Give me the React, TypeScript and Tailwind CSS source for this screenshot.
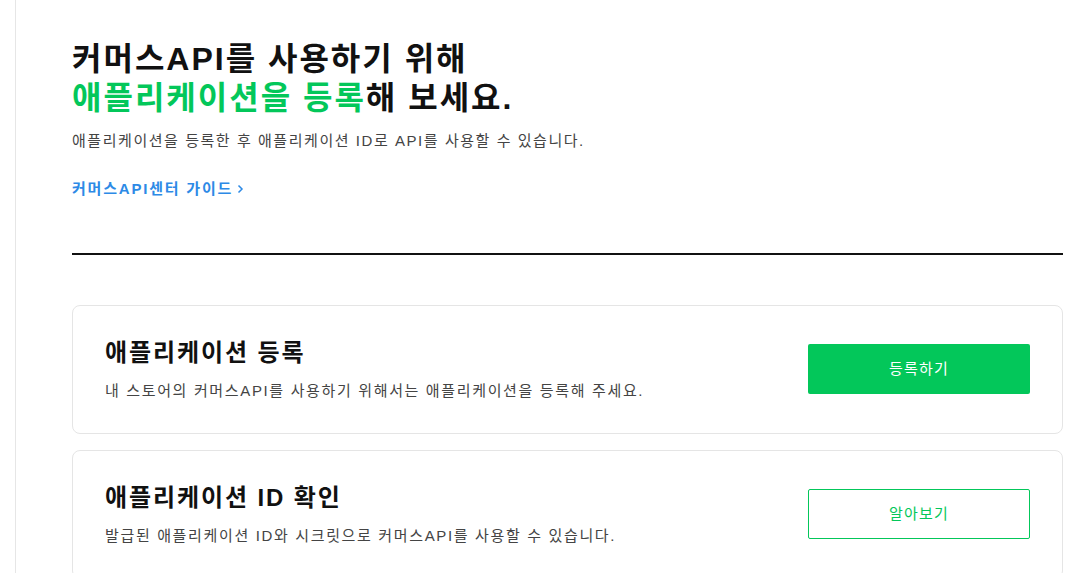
import React from "react";

const font = { fontFamily: '"Liberation Sans", "Noto Sans CJK KR", sans-serif' };

function Card({ title, desc, button, primary }: { title: string; desc: string; button: string; primary?: boolean }) {
  return (
    <div className="flex justify-between rounded-lg border border-[#e5e5e5] bg-white pl-[32px] pr-[32px] pt-[31px] pb-[32px]">
      <div className="flex flex-col">
        <h2 className="text-[24px] font-bold leading-[32px] tracking-[1.9px] text-[#111]">{title}</h2>
        <p className="mt-[12px] text-[15px] leading-[20px] tracking-[1.65px] text-[#444]">{desc}</p>
      </div>
      {primary ? (
        <button className="self-center w-[222px] h-[50px] rounded-[2px] bg-[#03c75a] text-[15px] tracking-[1.2px] text-white">{button}</button>
      ) : (
        <button className="self-center w-[222px] h-[50px] rounded-[2px] border border-[#03c75a] bg-white text-[15px] tracking-[1.2px] text-[#03c75a]">{button}</button>
      )}
    </div>
  );
}

export default function App() {
  return (
    <div className="min-h-[573px] w-[1075px] bg-white flex" style={font}>
      <div className="w-[16px] border-r border-[#e6e6e6]" />
      <div className="flex-1 pl-[56px] pr-[12px] pt-[40px]">
        <h1 className="text-[32px] font-bold leading-[39px] text-[#111] tracking-[2px]">
          커머스API를 사용하기 위해
          <br />
          <span className="text-[#03c75a]">애플리케이션을 등록</span>해 보세요.
        </h1>
        <p className="mt-[13px] text-[15px] leading-[20px] tracking-[1.55px] text-[#444]">
          애플리케이션을 등록한 후 애플리케이션 ID로 API를 사용할 수 있습니다.
        </p>
        <a className="mt-[28px] inline-flex items-center gap-[4px] text-[15px] font-bold leading-[20px] tracking-[1.8px] text-[#2d8ae6]">
          커머스API센터 가이드
          <svg width="7" height="10" viewBox="0 0 7 10" fill="none">
            <path d="M1.5 1.5L5 5L1.5 8.5" stroke="#2d8ae6" strokeWidth="1.5" />
          </svg>
        </a>
        <div className="mt-[52px] h-[2px] bg-[#111]" />
        <div className="mt-[50px] flex flex-col gap-[16px]">
          <Card
            title="애플리케이션 등록"
            desc="내 스토어의 커머스API를 사용하기 위해서는 애플리케이션을 등록해 주세요."
            button="등록하기"
            primary
          />
          <Card
            title="애플리케이션 ID 확인"
            desc="발급된 애플리케이션 ID와 시크릿으로 커머스API를 사용할 수 있습니다."
            button="알아보기"
          />
        </div>
      </div>
    </div>
  );
}
